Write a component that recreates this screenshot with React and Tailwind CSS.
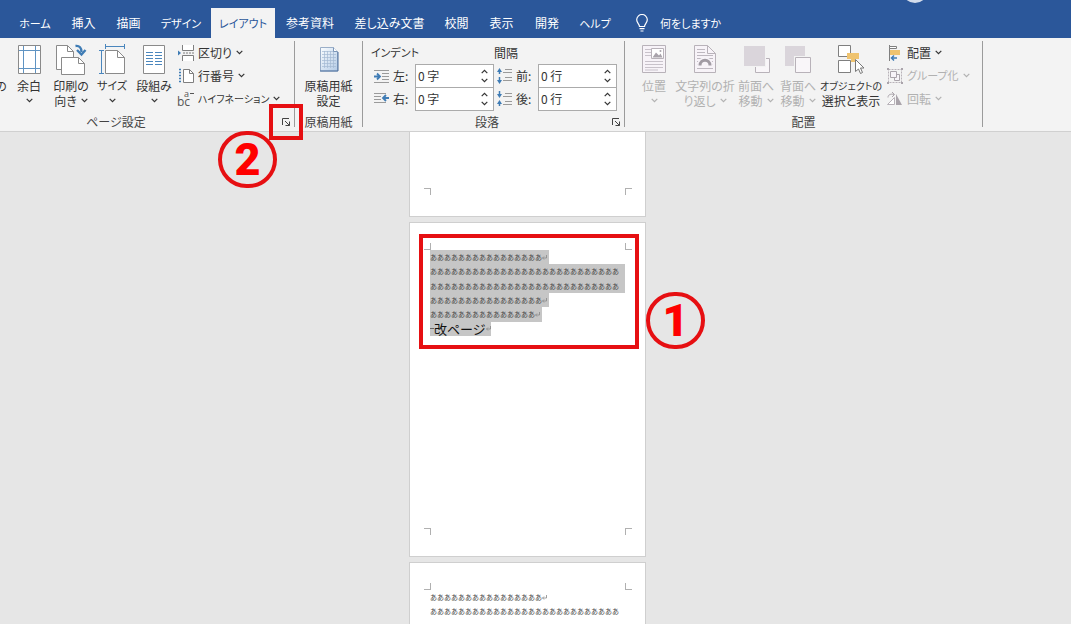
import { useState } from 'react';

const TABS = [
    { name: 'ホーム', width: 'w-[52px]', kana: true },
    { name: '挿入', width: 'w-[45px]' },
    { name: '描画', width: 'w-[45px]' },
    { name: 'デザイン', width: 'w-[60px]', kana: true },
    { name: 'レイアウト', width: 'w-[64px]', kana: true },
    { name: '参考資料', width: 'w-[70px]' },
    { name: '差し込み文書', width: 'w-[89px]' },
    { name: '校閲', width: 'w-[45px]' },
    { name: '表示', width: 'w-[45px]' },
    { name: '開発', width: 'w-[46px]' },
    { name: 'ヘルプ', width: 'w-[50px]', kana: true },
];

const SHORT_LINE = 'あ'.repeat(16);
const LONG_LINE = 'あ'.repeat(27);

function Chevron({ className = '' }) {
    return (
        <svg width="7" height="5" viewBox="0 0 7 5" fill="none" stroke="currentColor" strokeWidth="1.2" className={className}>
            <path d="M.7.8 3.5 3.6 6.3.8" />
        </svg>
    );
}

function Icon({ children }) {
    return <svg width="32" height="32" viewBox="0 0 32 32" fill="none" className="shrink-0">{children}</svg>;
}

function SmallIcon({ children }) {
    return <svg width="16" height="16" viewBox="0 0 16 16" fill="none" className="shrink-0">{children}</svg>;
}

function MarginsIcon() {
    return (
        <Icon>
            <path d="M5.5 2.5h22v28h-22z" fill="#fff" stroke="#8a8a8a" />
            <path d="M10.5 3v27M22.5 3v27M6 7.5h21M6 25.5h21" stroke="#5f93c2" />
        </Icon>
    );
}

function OrientationIcon() {
    return (
        <Icon>
            <path d="M1.5 2.5h11l6 6v18h-17z" fill="#fff" stroke="#8a8a8a" />
            <path d="M12.5 2.5v6h6" stroke="#8a8a8a" />
            <path d="M6.5 14.5h17l6 6v11h-23z" fill="#fff" stroke="#8a8a8a" />
            <path d="M23.5 14.5v6h6" stroke="#8a8a8a" />
            <path d="M20.5 3c4-.6 6 2 6 6" stroke="#3f7cb5" strokeWidth="2.4" />
            <path d="m22 7 4.5 4.5L30.500 7" stroke="#3f7cb5" strokeWidth="2.400" />
        </Icon>
    );
}

function SizeIcon() {
    return (
        <Icon>
            <path d="M9.500 7.500h12l7 7v16h-19z" fill="#fff" stroke="#8a8a8a" />
            <path d="M21.500 7.500v7h7" stroke="#8a8a8a" />
            <path d="M9 3.500h19M9.500 1v5M28.500 1v5M5.500 7.500v23M3 7.500h5M3 30.500h5" stroke="#4a86bd" />
        </Icon>
    );
}

function ColumnsIcon() {
    return (
        <Icon>
            <path d="M5.500 2.500h21v28h-21z" fill="#fff" stroke="#8a8a8a" />
            <path d="M8 9.500h7M8 12.500h7M8 15.500h7M8 18.500h7M8 21.500h7M17 9.500h7M17 12.500h7M17 15.500h7M17 18.500h7M17 21.500h7" stroke="#4a86bd" />
        </Icon>
    );
}

function ManuscriptIcon() {
    return (
        <Icon>
            <defs>
                <linearGradient id="sheet" x1="0" y1="0" x2="1" y2="1">
                    <stop offset="0" stopColor="#fafdff" />
                    <stop offset="1" stopColor="#b4cbe6" />
                </linearGradient>
            </defs>
            <path d="M7.500 4.500h13l4 4v19.500h-17z" fill="url(#sheet)" stroke="#9aaec8" />
            <path d="M11.500 8v17M14.500 8v17M17.500 8v17M20.500 8v17M9 8.500h14M9 11.500h14M9 14.500h14M9 17.500h14M9 20.500h14M9 23.500h14" stroke="#a3b9d3" strokeWidth=".7" />
            <path d="M20.500 4.500v4h4" fill="#fff" stroke="#7d97b8" />
            <path d="M7 28h18V9" stroke="#4a6f9e" />
        </Icon>
    );
}

function PositionIcon() {
    return (
        <Icon>
            <path d="M4.500 2.500h23v27h-23z" fill="#f7f3f8" stroke="#b8b2b9" />
            <path d="M7 6.500h6M7 9.500h6M7 12.500h6M7 18.500h18M7 21.500h18M7 24.500h18M7 27h13" stroke="#c8c2ca" />
            <path d="M13.500 5.500h12v10h-12z" fill="#fff" stroke="#b8b2b9" />
            <path d="m14.500 14.500 3.500-5 3 3 1.500-2 2 4z" fill="#a9a3ab" />
            <circle cx="22.500" cy="8" r="1" fill="#a9a3ab" />
        </Icon>
    );
}

function WrapIcon() {
    return (
        <Icon>
            <path d="M5.500 2.500h13l8 8v19h-21z" fill="#f7f3f8" stroke="#b8b2b9" />
            <path d="M18.500 2.500v8h8" stroke="#b8b2b9" />
            <path d="M8 6.500h8M8 9.500h8M8 12.500h16M8 15.500h16M8 18.500h3M21 18.500h3M8 21.500h2M22 21.500h2M8 25.500h16" stroke="#beb8c0" />
            <path d="M11 22.500c0-7 10-7 10 0" stroke="#f7f3f8" strokeWidth="6" />
            <path d="M11 22.500c0-7 10-7 10 0" stroke="#a19ba3" strokeWidth="3" />
        </Icon>
    );
}

function ForwardIcon() {
    return (
        <Icon>
            <path d="M15.500 15.500h14v14h-14z" fill="#f9f6f9" stroke="#b8b2b9" />
            <path d="M3 2h23v22H3z" fill="#f3f3f3" />
            <path d="M4 3h21v20H4z" fill="#dad5db" />
        </Icon>
    );
}

function BackwardIcon() {
    return (
        <Icon>
            <path d="M3 3h20v20H3z" fill="#dad5db" />
            <path d="M12 13h18v18H12z" fill="#f3f3f3" />
            <path d="M13.500 14.500h15v15h-15z" fill="#f9f6f9" stroke="#b8b2b9" />
        </Icon>
    );
}

function SelectionIcon() {
    return (
        <Icon>
            <path d="M3.500 2.500h12v11h-12zM3.500 17.500h12v12h-12z" fill="#fff" stroke="#7f7f7f" />
            <path d="M12 10h12v6h-4v3h-4v-3h-4z" fill="#efc36f" />
            <path d="M20.500 16.500v12l3-2.500 2 4.500 2-1-2-4.500h3.500z" fill="#fff" stroke="#777" />
        </Icon>
    );
}

function BreaksIcon() {
    return (
        <SmallIcon>
            <path d="M4.500 0v5.500h11V0M4.500 16v-5.500h11V16" fill="#fff" stroke="#7f7f7f" />
            <path d="M5 8h11" stroke="#7f7f7f" strokeDasharray="2 1" />
            <path d="m0 5.500 3 2.500-3 2.500z" fill="#3f7cb5" />
        </SmallIcon>
    );
}

function LineNumbersIcon() {
    return (
        <SmallIcon>
            <path d="M5.500 1.500h6l4 4v9h-10z" fill="#fff" stroke="#7f7f7f" />
            <path d="M11.500 1.500v4h4" stroke="#7f7f7f" />
            <path d="M1 1.500h2M1 4.500h2M1 7.500h2M1 10.500h2M1 13.500h2" stroke="#3f7cb5" strokeWidth="1.500" />
        </SmallIcon>
    );
}

function HyphenationIcon() {
    return (
        <svg width="16" height="16" viewBox="0 0 16 16" className="shrink-0 overflow-visible font-['Open_Sans',sans-serif]" fill="#555">
            <text x="-1" y="15" fontSize="12">bc</text>
            <text x="6" y="6" fontSize="9">a</text>
            <path d="M12 2h4v1h-4z" />
        </svg>
    );
}

function IndentLeftIcon() {
    return (
        <SmallIcon>
            <path d="M0 2.500h15M8 5.500h7M8 8.500h7M8 11.500h7M0 14.500h15" stroke="#9a9a9a" />
            <path d="M0 8.500h5M3 5.500l3 3-3 3" stroke="#3f7cb5" strokeWidth="1.800" />
        </SmallIcon>
    );
}

function IndentRightIcon() {
    return (
        <SmallIcon>
            <path d="M0 2.500h12M0 5.500h7M0 8.500h7M0 11.500h12" stroke="#9a9a9a" />
            <path d="M15 7h-5M12 4 9 7l3 3" stroke="#3f7cb5" strokeWidth="1.800" />
        </SmallIcon>
    );
}

function SpaceBeforeIcon() {
    return (
        <SmallIcon>
            <path d="M8 1.500h7M6 4.500h9M8 9.500h7M6 12.500h9" stroke="#9a9a9a" />
            <path d="M2.500 2v4M2.500 9v5" stroke="#3f7cb5" strokeWidth="1.500" />
            <path d="M0 4 2.500 0 5 4zM0 12l2.500 4L5 12z" fill="#3f7cb5" />
        </SmallIcon>
    );
}

function SpaceAfterIcon() {
    return (
        <SmallIcon>
            <path d="M8 2.500h7M6 5.500h9M8 10.500h7M6 13.500h9" stroke="#9a9a9a" />
            <path d="M2.500 0v5M2.500 11v4" stroke="#3f7cb5" strokeWidth="1.500" />
            <path d="m0 3 2.500 4L5 3zM0 13l2.500-4L5 13z" fill="#3f7cb5" />
        </SmallIcon>
    );
}

function AlignIcon() {
    return (
        <SmallIcon>
            <path d="M2.500 0v16" stroke="#7f7f7f" />
            <path d="M2.500 1.500h7v2h-7z" fill="#fff" stroke="#7f7f7f" />
            <path d="M3 5h10v5H3z" fill="#efc36f" />
            <path d="M10 13H5M7 10.500 4.500 13 7 15.500" stroke="#3f7cb5" strokeWidth="1.500" />
        </SmallIcon>
    );
}

function GroupIcon() {
    return (
        <SmallIcon>
            <path d="M1.500 1.500h13v13h-13z" stroke="#b8b2b9" strokeDasharray="2 1" />
            <path d="M7.500 6.500h5v6h-5z" fill="#f7f3f8" stroke="#aaa4ab" />
            <path d="M3.500 3.500h6v6h-6z" fill="#f7f3f8" stroke="#aaa4ab" />
            <path d="M0 0h2v2H0zM14 0h2v2h-2zM0 14h2v2H0zM14 14h2v2h-2z" fill="#aaa4ab" />
        </SmallIcon>
    );
}

function RotateIcon() {
    return (
        <SmallIcon>
            <path d="M.5 13.500h7v-7z" fill="#fff" stroke="#b8b2b9" />
            <path d="M9 3v11h6z" fill="#aaa4ab" />
            <path d="M1 6.500c0-3 3-4 6-3M5 1l2.500 2.500L5 6" stroke="#aaa4ab" />
        </SmallIcon>
    );
}

// Tall ribbon button: picture on top, one or two lines of caption below
function LargeButton({ icon, lines, menu, disabled, className, captionClass = '' }) {
    return (
        <button
            type="button"
            disabled={disabled}
            className={`flex shrink-0 flex-col items-center pt-[2px] leading-[15px] whitespace-nowrap ${disabled ? 'text-[#b1b1b1]' : 'text-[#333]'} ${className}`}
        >
            {icon}
            <span className={`mt-[3px] ${captionClass}`}>{lines[0]}</span>
            <span className="flex h-[15px] items-center gap-[4px]">
                {lines[1]}
                {menu && <Chevron />}
            </span>
        </button>
    );
}

function SmallButton({ icon, label, disabled, labelClass = '' }) {
    return (
        <button type="button" disabled={disabled} className={`flex h-[23px] items-center gap-1 whitespace-nowrap ${disabled ? 'text-[#b1b1b1]' : 'text-[#333]'}`}>
            {icon}
            <span className={labelClass}>{label}</span>
            <Chevron />
        </button>
    );
}

function Group({ title, launcher, className = '', children, overlay }) {
    return (
        <section className={`relative flex shrink-0 flex-col ${className}`}>
            <div className="flex h-[72px]">{children}</div>
            <footer className="flex h-[18px] items-center text-[#444]">
                <span className="flex-1 text-center whitespace-nowrap">{title}</span>
                {launcher && (
                    <button type="button" aria-label={`${title}の詳細`} className="mr-[3px] shrink-0">
                        <svg width="10" height="10" viewBox="0 0 10 10" fill="none" stroke="#444">
                            <path d="M1.500 8V1.500H8M4 4l4.500 4.500M8.500 4.500v4h-4" />
                        </svg>
                    </button>
                )}
            </footer>
            {overlay}
        </section>
    );
}

function Divider() {
    return <div className="mb-1 w-px shrink-0 bg-[#9b9b9b]" />;
}

function SpinField({ id, icon, label, unit }) {
    const [value, setValue] = useState(0);
    return (
        <div className="-mt-px flex h-6 items-center first:mt-0">
            {icon}
            <label htmlFor={id} className="ml-[3px] w-[22px] shrink-0 whitespace-nowrap">{label}</label>
            <div className="flex h-6 w-[79px] shrink-0 border border-[#ababab] bg-white">
                <input
                    id={id}
                    type="text"
                    value={`${value} ${unit}`}
                    onChange={(e) => setValue(parseInt(e.target.value, 10) || 0)}
                    className="w-full min-w-0 flex-1 bg-transparent pl-[2px] outline-none [font-feature-settings:normal]"
                />
                <div className="flex w-[17px] flex-col py-[2px]">
                    <button type="button" aria-label="増やす" onClick={() => setValue((v) => v + 1)} className="flex flex-1 items-center justify-center">
                        <Chevron className="rotate-180" />
                    </button>
                    <button type="button" aria-label="減らす" onClick={() => setValue((v) => Math.max(0, v - 1))} className="flex flex-1 items-center justify-center">
                        <Chevron />
                    </button>
                </div>
            </div>
        </div>
    );
}

function Callout({ number, className }) {
    return (
        <div className={`absolute z-10 flex h-[57px] w-[59px] items-center justify-center rounded-full border-4 border-[#e60f12] font-['Roboto',sans-serif] text-[45px] leading-none font-black text-[#f00] ${className}`}>
            {number}
        </div>
    );
}

function Ribbon() {
    return (
        <div className="flex shrink-0 border-b border-[#d0d0d0] bg-[#f3f3f3] pt-[3px]">
            <Group
                title="ページ設定"
                launcher
                className="-ml-[49px] w-[343px]"
                overlay={
                    <>
                        <div className="absolute top-[63px] -right-[9px] z-10 h-9 w-[34px] border-4 border-[#e60f12]" />
                        <Callout number="2" className="top-[90px] right-[17px]" />
                    </>
                }
            >
                <LargeButton icon={<Icon />} lines={['文字列の']} className="w-[57px] pl-[7px]" />
                <LargeButton icon={<MarginsIcon />} lines={['余白']} menu className="w-[42px]" />
                <LargeButton icon={<OrientationIcon />} lines={['印刷の', '向き']} menu className="w-[42px]" />
                <LargeButton icon={<SizeIcon />} lines={['サイズ']} menu captionClass="text-[11px]" className="w-[40px]" />
                <LargeButton icon={<ColumnsIcon />} lines={['段組み']} menu className="w-[44px]" />
                <div className="pl-[2px]">
                    <SmallButton icon={<BreaksIcon />} label="区切り" />
                    <SmallButton icon={<LineNumbersIcon />} label="行番号" />
                    <SmallButton icon={<HyphenationIcon />} label="ハイフネーション" labelClass="text-[10px]" />
                </div>
            </Group>
            <Divider />
            <Group title="原稿用紙" className="w-[67px]">
                <LargeButton icon={<ManuscriptIcon />} lines={['原稿用紙', '設定']} className="w-[67px]" />
            </Group>
            <Divider />
            <Group title="段落" launcher className="w-[261px]">
                <div className="w-[131px] shrink-0 pl-2 text-[#333]">
                    <h3 className="h-[23px] text-[11px] leading-[23px]">インデント</h3>
                    <div className="pl-[3px]">
                        <SpinField id="indent-left" icon={<IndentLeftIcon />} label="左:" unit="字" />
                        <SpinField id="indent-right" icon={<IndentRightIcon />} label="右:" unit="字" />
                    </div>
                </div>
                <div className="text-[#333]">
                    <h3 className="h-[23px] leading-[23px]">間隔</h3>
                    <div className="pl-[3px]">
                        <SpinField id="space-before" icon={<SpaceBeforeIcon />} label="前:" unit="行" />
                        <SpinField id="space-after" icon={<SpaceAfterIcon />} label="後:" unit="行" />
                    </div>
                </div>
            </Group>
            <Divider />
            <Group title="配置" className="w-[357px]">
                <LargeButton icon={<PositionIcon />} lines={['位置']} menu disabled className="ml-2 w-[42px]" />
                <LargeButton icon={<WrapIcon />} lines={['文字列の折', 'り返し']} menu disabled className="w-[60px]" />
                <LargeButton icon={<ForwardIcon />} lines={['前面へ', '移動']} menu disabled className="w-[42px]" />
                <LargeButton icon={<BackwardIcon />} lines={['背面へ', '移動']} menu disabled className="w-[42px]" />
                <LargeButton icon={<SelectionIcon />} lines={['オブジェクトの', '選択と表示']} captionClass="text-[10px]" className="w-[64px]" />
                <div className="pl-1">
                    <SmallButton icon={<AlignIcon />} label="配置" />
                    <SmallButton icon={<GroupIcon />} label="グループ化" labelClass="text-[11px]" disabled />
                    <SmallButton icon={<RotateIcon />} label="回転" disabled />
                </div>
            </Group>
            <Divider />
        </div>
    );
}

function ReturnMark() {
    return (
        <svg width="5" height="5" viewBox="0 0 5 5" fill="none" stroke="#888" strokeWidth=".8" className="shrink-0">
            <path d="M4.500 0v3H.5M2 1.500.5 3 2 4.500" />
        </svg>
    );
}

function TextLine({ children, selected, mark, className = '' }) {
    return (
        <p className={`flex items-center leading-[14px] whitespace-nowrap ${selected ? 'bg-[#c6c6c6]' : ''} ${className}`}>
            {children}
            {mark && <ReturnMark />}
        </p>
    );
}

function Page({ className = '', children, overlay }) {
    return (
        <article className={`relative h-[335px] w-[237px] shrink-0 border border-[#cfcfcf] bg-white px-[20px] pt-[27px] text-[7px] text-[#444] ${className}`}>
            <i className="absolute top-[20px] left-[14px] size-[7px] border-r border-b border-[#b0b0b0]" />
            <i className="absolute top-[20px] right-[13px] size-[7px] border-b border-l border-[#b0b0b0]" />
            <i className="absolute bottom-[21px] left-[14px] size-[7px] border-t border-r border-[#b0b0b0]" />
            <i className="absolute right-[13px] bottom-[21px] size-[7px] border-t border-l border-[#b0b0b0]" />
            {children}
            {overlay}
        </article>
    );
}

function Document() {
    return (
        <main className="flex min-h-0 flex-1 flex-col items-center gap-[5px] overflow-hidden bg-[#e6e6e6] pr-4 [font-feature-settings:normal]">
            <Page className="-mt-[250px]" />
            <Page
                overlay={
                    <>
                        <div className="absolute top-[11px] left-[9px] h-[115px] w-[220px] border-4 border-[#e60f12]" />
                        <Callout number="1" className="top-[69px] left-[236px]" />
                    </>
                }
            >
                <div className="grid h-[86px] grid-rows-6 justify-items-start">
                    <TextLine selected mark className="w-[119px]">{SHORT_LINE}</TextLine>
                    <TextLine selected className="w-full">{LONG_LINE}</TextLine>
                    <TextLine selected className="w-full">{LONG_LINE}</TextLine>
                    <TextLine selected mark className="w-[119px]">{SHORT_LINE}</TextLine>
                    <TextLine selected mark className="w-[112px]">{SHORT_LINE.slice(1)}</TextLine>
                    <TextLine selected mark>
                        <span className="w-[4px] border-t border-dashed border-[#666]" />
                        <span className="text-[13px] leading-[12px] text-[#111]">改ページ</span>
                    </TextLine>
                </div>
            </Page>
            <Page>
                <div className="grid h-[86px] grid-rows-6 justify-items-start">
                    <TextLine mark>{SHORT_LINE}</TextLine>
                    <TextLine>{LONG_LINE}</TextLine>
                </div>
            </Page>
        </main>
    );
}

export default function App() {
    const [active, setActive] = useState('レイアウト');

    return (
        <div className="flex h-screen flex-col overflow-hidden font-['Noto_Sans_CJK_JP',sans-serif] text-[12px] [font-feature-settings:'palt']">
            <header className="relative flex shrink-0 items-end overflow-hidden bg-[#2b579a] pt-2 pl-[9px] text-white">
                <nav className="flex">
                    {TABS.map((tab) => (
                        <button
                            key={tab.name}
                            type="button"
                            onClick={() => setActive(tab.name)}
                            className={`h-[30px] shrink-0 text-center whitespace-nowrap ${tab.width} ${tab.kana ? 'text-[11px]' : ''} ${active === tab.name ? 'bg-[#f3f3f3] text-[#2b579a]' : ''}`}
                        >
                            {tab.name}
                        </button>
                    ))}
                </nav>
                <button type="button" className="ml-4 flex h-[30px] items-center gap-3 text-[11px] whitespace-nowrap">
                    <svg width="12" height="18" viewBox="0 0 12 18" fill="none" stroke="currentColor" strokeWidth="1.200">
                        <path d="M3.500 12.500c0-2.500-2.800-3.500-2.800-6.700a5.300 5.300 0 0 1 10.600 0c0 3.200-2.800 4.200-2.800 6.700zM3.500 14.700h5M4.500 17h3" />
                    </svg>
                    何をしますか
                </button>
                <div className="absolute -top-[23px] right-[143px] size-[26px] rounded-full bg-[#d3dceb]" />
            </header>
            <Ribbon />
            <Document />
        </div>
    );
}
